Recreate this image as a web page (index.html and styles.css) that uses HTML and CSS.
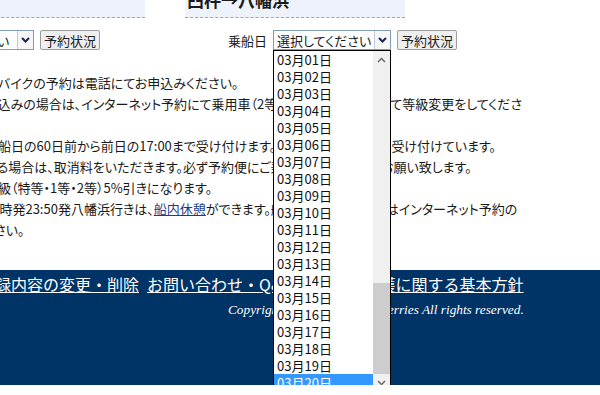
FILE: index.html
```html
<!DOCTYPE html>
<html lang="ja">
<head>
    <meta charset="UTF-8">
    <meta name="viewport" content="width=device-width, initial-scale=1.0">
    <title>乗船予約</title>
    <link rel="stylesheet" href="styles.css">
</head>
<body>
    <div class="page">
        <!-- route headings -->
        <div class="routes">
            <div class="route-bar"><h2>八幡浜→臼杵</h2></div>
            <div class="route-bar"><h2>臼杵→八幡浜</h2></div>
        </div>

        <!-- date select + status button per route -->
        <div class="forms">
            <div class="booking">
                <span class="label">乗船日</span>
                <div class="select select-wide">
                    <span class="select-text">選択してください</span>
                    <span class="select-arrow">
                        <svg width="9" height="6" viewBox="0 0 9 6"><path d="M1 1l3.5 3.5L8 1" stroke="#1c2550" stroke-width="2" fill="none"/></svg>
                    </span>
                </div>
                <button class="btn">予約状況</button>
            </div>
            <div class="booking">
                <span class="label">乗船日</span>
                <div class="select">
                    <span class="select-text">選択してください</span>
                    <span class="select-arrow">
                        <svg width="9" height="6" viewBox="0 0 9 6"><path d="M1 1l3.5 3.5L8 1" stroke="#1c2550" stroke-width="2" fill="none"/></svg>
                    </span>
                    <!-- opened list -->
                    <div class="dropdown">
                        <ul class="options">
                            <li>03月01日</li>
                            <li>03月02日</li>
                            <li>03月03日</li>
                            <li>03月04日</li>
                            <li>03月05日</li>
                            <li>03月06日</li>
                            <li>03月07日</li>
                            <li>03月08日</li>
                            <li>03月09日</li>
                            <li>03月10日</li>
                            <li>03月11日</li>
                            <li>03月12日</li>
                            <li>03月13日</li>
                            <li>03月14日</li>
                            <li>03月15日</li>
                            <li>03月16日</li>
                            <li>03月17日</li>
                            <li>03月18日</li>
                            <li>03月19日</li>
                            <li class="selected">03月20日</li>
                        </ul>
                        <div class="scrollbar">
                            <span class="scroll-btn">
                                <svg width="9" height="6" viewBox="0 0 9 6"><path d="M1 5l3.5-3.5L8 5" stroke="#6a6a6a" stroke-width="1.5" fill="none"/></svg>
                            </span>
                            <span class="track"></span>
                            <span class="thumb"></span>
                            <span class="scroll-btn">
                                <svg width="9" height="6" viewBox="0 0 9 6"><path d="M1 1l3.5 3.5L8 1" stroke="#6a6a6a" stroke-width="1.5" fill="none"/></svg>
                            </span>
                        </div>
                    </div>
                </div>
                <button class="btn">予約状況</button>
            </div>
        </div>

        <!-- notes -->
        <div class="notes">
            <p>※　バイクの予約は電話にてお申込みください。</p>
            <p>お申込みの場合は、インターネット予約にて乗用車（2等)で予約の上、窓口にて等級変更をしてくださ</p>
            <p>い。</p>
            <p>※乗船日の60日前から前日の17:00まで受け付けます。当日分は電話でのみ受け付けています。</p>
            <p>される場合は、取消料をいただきます。必ず予約便にご乗船いただけるようお願い致します。</p>
            <p>全等級（特等・1等・2等）5%引きになります。</p>
            <p>※24時発23:50発八幡浜行きは、<a href="#" class="note-link">船内休憩</a>ができます。船内休憩ご希望の便はインターネット予約の</p>
            <p>ください。</p>
        </div>

        <footer class="footer">
            <nav class="footer-links">
                <a href="#">会員登録内容の変更・削除</a>
                <a href="#">お問い合わせ・Q&amp;A</a>
                <a href="#">個人情報保護に関する基本方針</a>
            </nav>
            <p class="copyright">Copyright © 2011 Uwajima Ferries All rights reserved.</p>
        </footer>
    </div>
</body>
</html>
```

FILE: styles.css
```css
body {
    margin: 0;
    font-family: "Noto Sans CJK JP", sans-serif;
    font-size: 13px;
    font-feature-settings: "palt";
    color: #1a1a1a;
    background-color: #fff;
    overflow: hidden;
}

.page {
    width: 600px;
    height: 395px;
}

.routes {
    display: flex;
    gap: 40px;
    margin-top: -10px;
}

.route-bar {
    width: 220px;
    background-color: #eef2fb;
    border-bottom: 1px dashed #a4a4a4;
}

.route-bar:first-child {
    width: 345px;
    margin-left: -200px;
}

.route-bar h2 {
    margin: 0;
    padding: 0 2px 8px;
    font-size: 17px;
    line-height: 19px;
    white-space: nowrap;
}

.forms {
    display: flex;
    gap: 128px;
    margin: 12px 0 0 -134px;
}

.booking {
    display: flex;
    align-items: center;
}

.label {
    margin-right: 6px;
    white-space: nowrap;
}

.select {
    position: relative;
    width: 118px;
    height: 20px;
    box-sizing: border-box;
    border: 1px solid #7f9db9;
    background-color: #fff;
    display: flex;
    align-items: center;
}

.select-wide {
    width: 123px;
}

.select-text {
    flex: 1;
    padding-left: 3px;
    white-space: nowrap;
    overflow: hidden;
}

.select-arrow {
    width: 16px;
    height: 18px;
    box-sizing: border-box;
    border-left: 1px solid #c4c8d4;
    background-color: #f6f6f6;
    display: flex;
    align-items: center;
    justify-content: center;
}

.btn {
    margin-left: 6px;
    width: 60px;
    height: 20px;
    padding: 0;
    font: inherit;
    color: #222;
    background-color: #efefef;
    border: 1px solid #9c9c9c;
    border-radius: 2px;
}

.dropdown {
    position: absolute;
    top: calc(100% + 1px);
    left: -1px;
    width: 118px;
    box-sizing: border-box;
    border: 1px solid #000;
    background-color: #fff;
    display: flex;
    z-index: 2;
}

.options {
    flex: 1;
    margin: 0;
    padding: 0;
    list-style: none;
}

.options li {
    height: 17px;
    line-height: 17px;
    padding-left: 3px;
    white-space: nowrap;
    color: #111;
}

.options li.selected {
    background-color: #3399ff;
    color: #fff;
}

.scrollbar {
    width: 17px;
    display: grid;
    grid-template-rows: 17px 1fr 91px 17px;
    background-color: #f0f0f0;
}

.scroll-btn {
    display: flex;
    align-items: center;
    justify-content: center;
}

.thumb {
    background-color: #cdcdcd;
}

.notes {
    margin: 22px 0 0 -28px;
    line-height: 21px;
}

.notes p {
    margin: 0;
    white-space: nowrap;
}

.note-link {
    color: #1b3c8c;
}

.footer {
    margin-top: 30px;
    height: 200px;
    background-color: #003366;
    color: #fff;
}

.footer-links {
    display: flex;
    gap: 8px;
    margin-left: -53px;
    padding-top: 4px;
    font-size: 16px;
    font-feature-settings: normal;
    line-height: 20px;
    white-space: nowrap;
}

.footer-links a {
    color: #fff;
}

.copyright {
    margin: 8px 0 0;
    padding-left: 228px;
    font-family: "Liberation Serif", serif;
    font-style: italic;
    font-size: 13.3px;
    line-height: 16px;
    white-space: nowrap;
}
```
